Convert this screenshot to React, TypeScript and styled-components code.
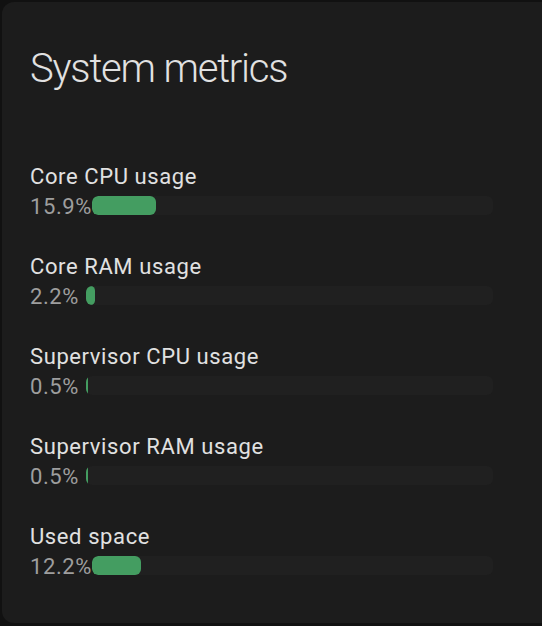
import React from 'react';
import styled, { createGlobalStyle } from 'styled-components';

const GlobalStyle = createGlobalStyle`
  html, body {
    margin: 0;
    padding: 0;
    background: #111111;
    overflow: hidden;
  }
  body {
    font-family: Roboto, "Noto Sans", sans-serif;
  }
`;

type Metric = {
  label: string;
  value: number;
};

const metrics: Metric[] = [
  { label: 'Core CPU usage', value: 15.9 },
  { label: 'Core RAM usage', value: 2.2 },
  { label: 'Supervisor CPU usage', value: 0.5 },
  { label: 'Supervisor RAM usage', value: 0.5 },
  { label: 'Used space', value: 12.2 },
];

export default function App() {
  return (
    <>
      <GlobalStyle />
      <Card>
        <Title>System metrics</Title>
        <MetricList>
          {metrics.map((m) => (
            <MetricRow key={m.label}>
              <Label>{m.label}</Label>
              <ValueLine>
                <Value>{m.value.toFixed(1)}%</Value>
                <Track>
                  <Fill style={{ width: `${m.value}%` }} />
                </Track>
              </ValueLine>
            </MetricRow>
          ))}
        </MetricList>
      </Card>
    </>
  );
}

const Card = styled.div`
  box-sizing: border-box;
  margin: 2px 0 3px 2px;
  width: calc(100% + 20px);
  height: 621px;
  padding: 43px 0 40px 28px;
  background: #1c1c1c;
  border-radius: 12px;
  display: flex;
  flex-direction: column;
  gap: 69px;
`;

const Title = styled.h1`
  margin: 0;
  font-size: 40px;
  line-height: 48px;
  font-weight: 300;
  letter-spacing: -1.2px;
  color: #e1e1e1;
`;

const MetricList = styled.div`
  display: flex;
  flex-direction: column;
  gap: 30px;
  width: 463px;
`;

const MetricRow = styled.div`
  display: flex;
  flex-direction: column;
`;

const Label = styled.div`
  font-size: 22px;
  line-height: 30px;
  letter-spacing: 0.6px;
  color: #e1e1e1;
`;

const ValueLine = styled.div`
  display: flex;
  align-items: center;
  height: 30px;
`;

const Value = styled.div`
  min-width: 56px;
  flex-shrink: 0;
  font-size: 22px;
  line-height: 30px;
  letter-spacing: 0.6px;
  color: #9e9e9e;
`;

const Track = styled.div`
  flex: 1;
  height: 19px;
  margin-bottom: 3px;
  border-radius: 6px;
  background: #202020;
  overflow: hidden;
`;

const Fill = styled.div`
  height: 100%;
  border-radius: 6px;
  background: #449d61;
`;
